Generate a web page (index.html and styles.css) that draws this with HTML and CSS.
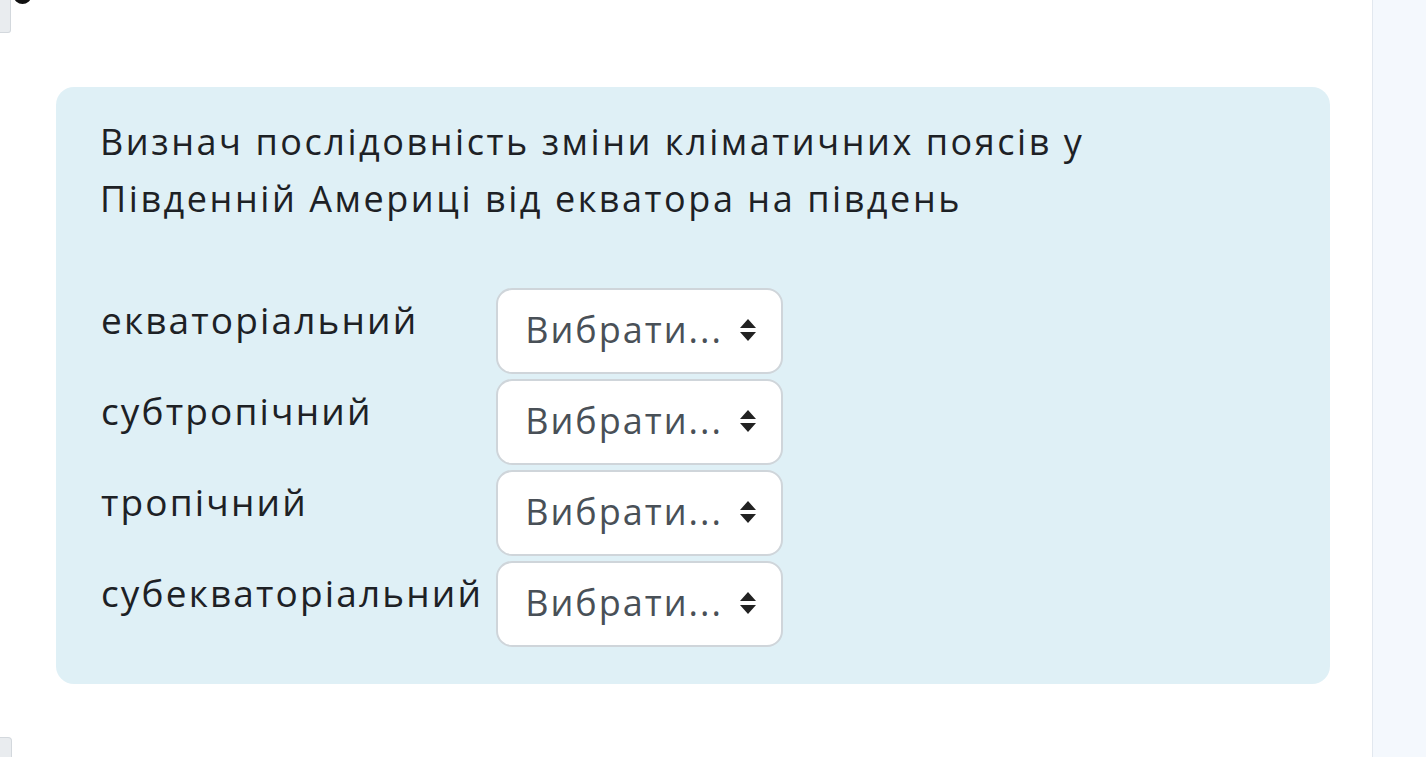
FILE: index.html
```html
<!DOCTYPE html>
<html lang="uk">
<head>
<meta charset="utf-8">
<title>Питання</title>
<link rel="stylesheet" href="styles.css">
</head>
<body>
<div class="page">
  <main class="main">
    <div class="stub stub-top"></div>
    <div class="dot"></div>
    <div class="stub stub-bottom"></div>
    <section class="formulation">
      <p class="qtext">Визнач послідовність зміни кліматичних поясів у Південній Америці від екватора на південь</p>
      <div class="answers">
        <div class="label">екваторіальний</div>
        <div class="select"><span>Вибрати...</span><svg class="arrows" width="16" height="22" viewBox="0 0 16 22"><path d="M8 0 L16 9 L0 9 Z M0 13 L16 13 L8 22 Z" fill="#222"/></svg></div>
        <div class="label">субтропічний</div>
        <div class="select"><span>Вибрати...</span><svg class="arrows" width="16" height="22" viewBox="0 0 16 22"><path d="M8 0 L16 9 L0 9 Z M0 13 L16 13 L8 22 Z" fill="#222"/></svg></div>
        <div class="label">тропічний</div>
        <div class="select"><span>Вибрати...</span><svg class="arrows" width="16" height="22" viewBox="0 0 16 22"><path d="M8 0 L16 9 L0 9 Z M0 13 L16 13 L8 22 Z" fill="#222"/></svg></div>
        <div class="label">субекваторіальний</div>
        <div class="select"><span>Вибрати...</span><svg class="arrows" width="16" height="22" viewBox="0 0 16 22"><path d="M8 0 L16 9 L0 9 Z M0 13 L16 13 L8 22 Z" fill="#222"/></svg></div>
      </div>
    </section>
  </main>
  <aside class="drawer"></aside>
</div>
</body>
</html>
```
FILE: styles.css
```css
html, body {
  margin: 0;
  padding: 0;
  background: #ffffff;
  height: 100%;
  overflow: hidden;
}
body {
  font-family: "Open Sans", "DejaVu Sans", sans-serif;
  color: #1d2125;
}
.page {
  display: flex;
  height: 757px;
}
.main {
  position: relative;
  width: 1372px;
  flex: none;
  padding: 87px 0 0 56px;
  box-sizing: border-box;
}
.drawer {
  flex: 1;
  background: #f4f8fd;
  border-left: 1px solid #e2e8ef;
}
.stub {
  position: absolute;
  left: 0;
  background: #e9ecef;
  border: 1px solid #d3d8dd;
  border-left: none;
}
.stub-top {
  top: -4px;
  width: 10px;
  height: 35px;
  border-radius: 0 0 3px 0;
}
.stub-bottom {
  top: 737px;
  width: 11px;
  height: 30px;
  border-radius: 0 4px 0 0;
}
.dot {
  position: absolute;
  left: 14px;
  top: -11px;
  width: 17px;
  height: 15px;
  border-radius: 50%;
  background: #111;
}
.formulation {
  width: 1274px;
  height: 597px;
  box-sizing: border-box;
  background: #dff0f6;
  border-radius: 18px;
  padding: 26px 44px 38px 44px;
}
.qtext {
  margin: 0;
  font-size: 36px;
  line-height: 57px;
  width: 1040px;
  letter-spacing: 2.55px;
}
.answers {
  margin-top: 61px;
  display: grid;
  grid-template-columns: auto auto;
  justify-content: start;
  column-gap: 13px;
  row-gap: 5px;
}
.label {
  font-size: 37px;
  line-height: 57px;
  padding-top: 3px;
  padding-left: 1px;
  letter-spacing: 2.15px;
}
.select {
  width: 287px;
  height: 86px;
  box-sizing: border-box;
  background: #ffffff;
  border: 2px solid #cfd5da;
  border-radius: 16px;
  display: flex;
  align-items: center;
  padding: 0 25px 4px 27px;
  font-size: 36px;
  color: #495057;
  letter-spacing: 2px;
}
.select span {
  flex: 1;
  white-space: nowrap;
}
.arrows {
  display: block;
  margin-top: 2px;
}
```
